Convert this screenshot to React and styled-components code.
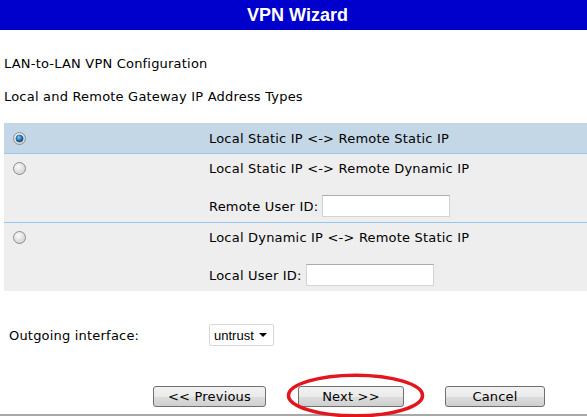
import React, { useState } from 'react';
import styled, { createGlobalStyle } from 'styled-components';

const GlobalStyle = createGlobalStyle`
  html, body {
    margin: 0;
    padding: 0;
    background: #ffffff;
  }
  body {
    font-family: "DejaVu Sans", Verdana, sans-serif;
    font-size: 13px;
    letter-spacing: 0.2px;
    color: #000;
  }
`;

const options = [
  { id: 'ss', label: 'Local Static IP <-> Remote Static IP' },
  { id: 'sd', label: 'Local Static IP <-> Remote Dynamic IP', field: 'Remote User ID:' },
  { id: 'ds', label: 'Local Dynamic IP <-> Remote Static IP', field: 'Local User ID:' },
];

const Radio = ({ checked }) => (
  <svg width="13" height="13" viewBox="0 0 13 13">
    <defs>
      <radialGradient id="rOff" cx="40%" cy="35%" r="70%">
        <stop offset="0%" stopColor="#fbfbfb" />
        <stop offset="100%" stopColor="#cfcfcf" />
      </radialGradient>
      <radialGradient id="rDot" cx="40%" cy="35%" r="70%">
        <stop offset="0%" stopColor="#7fd0f5" />
        <stop offset="60%" stopColor="#1c6fb2" />
        <stop offset="100%" stopColor="#0b3f78" />
      </radialGradient>
    </defs>
    <circle cx="6.5" cy="6.5" r="6" fill="url(#rOff)" stroke="#8e8e8e" strokeWidth="1" />
    {checked && <circle cx="6.5" cy="6.5" r="3.6" fill="url(#rDot)" stroke="#24507a" strokeWidth="0.6" />}
  </svg>
);

const App = () => {
  const [choice, setChoice] = useState('ss');

  return (
    <Page>
      <GlobalStyle />
      <Header>VPN Wizard</Header>
      <Intro $gap={27}>LAN-to-LAN VPN Configuration</Intro>
      <Intro $gap={19}>Local and Remote Gateway IP Address Types</Intro>

      <Options>
        {options.map((o, i) => (
          <OptionRow
            key={o.id}
            $active={choice === o.id}
            $last={i === options.length - 1}
            $tall={!!o.field}
            onClick={() => setChoice(o.id)}
          >
            <RadioCell>
              <Radio checked={choice === o.id} />
            </RadioCell>
            <TextCell>
              <span>{o.label}</span>
              {o.field && (
                <FieldLine>
                  <span>{o.field}</span>
                  <TextInput type="text" />
                </FieldLine>
              )}
            </TextCell>
          </OptionRow>
        ))}
      </Options>

      <InterfaceRow>
        <InterfaceLabel>Outgoing interface:</InterfaceLabel>
        <SelectBox>
          <span>untrust</span>
          <svg width="8" height="4" viewBox="0 0 8 4">
            <path d="M0 0 L8 0 L4 4 Z" fill="#000" />
          </svg>
        </SelectBox>
      </InterfaceRow>

      <ButtonBar>
        <Button $w={113}>&lt;&lt; Previous</Button>
        <NextWrap>
          <Button $w={106}>Next &gt;&gt;</Button>
          <Circled width="139" height="45" viewBox="0 0 139 45">
            <ellipse cx="69.5" cy="22.5" rx="67" ry="20.3" fill="none" stroke="#e3161f" strokeWidth="3.6" />
          </Circled>
        </NextWrap>
        <Button $w={100}>Cancel</Button>
      </ButtonBar>
    </Page>
  );
};

const Page = styled.div`
  width: 587px;
  height: 417px;
  overflow: hidden;
  display: flex;
  flex-direction: column;
`;

const Header = styled.div`
  height: 30px;
  background: #0000cc;
  color: #ffffff;
  font-family: "Liberation Sans", Arial, sans-serif;
  font-weight: bold;
  font-size: 18px;
  letter-spacing: 0;
  line-height: 30px;
  text-align: center;
  padding-left: 8px;
`;

const Intro = styled.div`
  margin-left: 4px;
  margin-top: ${(p) => p.$gap}px;
  line-height: 14px;
`;

const Options = styled.div`
  margin: 19px 0 0 4px;
  display: flex;
  flex-direction: column;
`;

const OptionRow = styled.div`
  display: grid;
  grid-template-columns: 205px 1fr;
  background: ${(p) => (p.$active ? '#c4d7e6' : '#eeeeee')};
  border-bottom: ${(p) => (p.$last ? 'none' : '1px solid #98c5ec')};
  padding: ${(p) => (p.$tall ? '7px 0 5px' : '8px 0 7px')};
  cursor: pointer;
`;

const RadioCell = styled.div`
  padding-left: 9px;
  height: 15px;
  display: flex;
  align-items: center;
`;

const TextCell = styled.div`
  display: flex;
  flex-direction: column;
  line-height: 15px;
`;

const FieldLine = styled.div`
  display: flex;
  align-items: center;
  gap: 4px;
  margin-top: 19px;
`;

const TextInput = styled.input`
  box-sizing: border-box;
  width: 128px;
  height: 22px;
  border: 1px solid #d4d4d4;
  border-top-color: #ababab;
  background: #ffffff;
  margin: 0;
`;

const InterfaceRow = styled.div`
  display: flex;
  align-items: center;
  margin-top: 33px;
  padding-left: 9px;
  height: 22px;
`;

const InterfaceLabel = styled.div`
  width: 200px;
`;

const SelectBox = styled.div`
  box-sizing: border-box;
  width: 65px;
  height: 22px;
  border: 1px solid #d8d8d8;
  border-radius: 2px;
  display: flex;
  align-items: center;
  justify-content: space-between;
  padding: 0 6px 0 4px;
  font-family: "Liberation Sans", Arial, sans-serif;
  font-size: 13px;
  letter-spacing: 0;
`;

const ButtonBar = styled.div`
  display: flex;
  align-items: center;
  margin-top: 40px;
  padding-left: 153px;
  gap: 32px;
  height: 21px;
  padding-bottom: 7px;
  border-bottom: 2px solid #a8a8a8;
`;

const NextWrap = styled.div`
  position: relative;
  display: flex;
  margin-right: 9px;
`;

const Circled = styled.svg`
  position: absolute;
  left: -12px;
  top: -13px;
  pointer-events: none;
`;

const Button = styled.button`
  box-sizing: border-box;
  width: ${(p) => p.$w}px;
  height: 21px;
  margin: 0;
  padding: 0;
  border: 1px solid #707070;
  border-radius: 3px;
  background: linear-gradient(#f2f2f2 0%, #ebebeb 50%, #dddddd 51%, #cfcfcf 100%);
  font-family: "DejaVu Sans", Verdana, sans-serif;
  font-size: 13px;
  letter-spacing: 0.2px;
  color: #000;
`;

export default App;
